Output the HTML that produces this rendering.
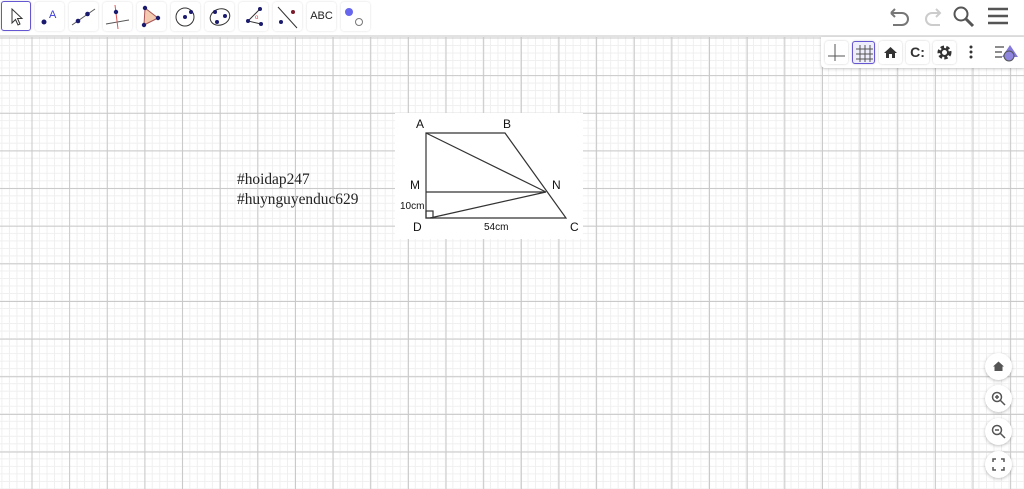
<!DOCTYPE html>
<html><head><meta charset="utf-8"><style>
*{margin:0;padding:0;box-sizing:border-box}
body{width:1024px;height:489px;overflow:hidden;position:relative;background:#fff;font-family:"Liberation Sans",sans-serif}
#grid{position:absolute;left:0;top:37px;width:1024px;height:452px;
background-image:
linear-gradient(to right,#c8c8c8 1px,transparent 1px),
linear-gradient(to bottom,#c8c8c8 1px,transparent 1px),
linear-gradient(to right,#efefef 1px,transparent 1px),
linear-gradient(to bottom,#efefef 1px,transparent 1px);
background-size:37.65px 37.65px,37.65px 37.65px,7.53px 7.53px,7.53px 7.53px;
background-position:31.5px 0.5px,31.5px 0.5px,31.5px 0.5px,31.5px 0.5px}
#tb{position:absolute;left:0;top:0;width:1024px;height:37px;background:#fff;border-bottom:2px solid #e2e2e2}
.tool{position:absolute;top:2px;width:29px;height:29px;border-radius:3px;background:#fff;box-shadow:0 0 2px rgba(0,0,0,.15)}
.tool svg{width:29px;height:29px}
.sel{border:1.5px solid #6557d2}
#ss{position:absolute;left:821px;top:37px;width:203px;height:31px;background:#fff;border-radius:0 0 0 4px;box-shadow:0 1px 3px rgba(0,0,0,.2)}
.sb{position:absolute;top:4px;width:23px;height:23px;border-radius:3px;box-shadow:0 0 2px rgba(0,0,0,.2)}
.rb{position:absolute;left:985px;width:27px;height:27px;border-radius:50%;background:#fff;box-shadow:0 1px 3px rgba(0,0,0,.25)}
.rb svg{width:27px;height:27px}
.tx{position:absolute;left:237px;font-family:"Liberation Serif",serif;font-size:15.4px;color:#222}
</style></head><body>
<div id="grid"></div>
<div id="tb">
<div class="tool sel" style="left:1px;top:1px;width:30px;height:30px"><svg viewBox="0 0 29 29"><path d="M10 7 L10 21 L13.5 17.5 L16 23 L18 22 L15.5 16.5 L20 16.5 Z" fill="none" stroke="#333" stroke-width="1"/></svg></div>
<div class="tool" style="left:35px"><svg viewBox="0 0 29 29"><circle cx="9" cy="20" r="2.5" fill="#1a1a6e"/><text x="14" y="16" font-size="11" fill="#3b3bd6" font-family="Liberation Sans">A</text></svg></div>
<div class="tool" style="left:69px"><svg viewBox="0 0 29 29"><line x1="3" y1="23" x2="26" y2="7" stroke="#555"/><circle cx="9" cy="19" r="2.3" fill="#1a1a6e"/><circle cx="18.5" cy="12" r="2.3" fill="#1a1a6e"/></svg></div>
<div class="tool" style="left:103px"><svg viewBox="0 0 29 29"><line x1="3" y1="22" x2="26" y2="18" stroke="#555"/><line x1="12" y1="3" x2="15" y2="27" stroke="#d55"/><circle cx="13" cy="10" r="2.2" fill="#1a1a6e"/></svg></div>
<div class="tool" style="left:137px"><svg viewBox="0 0 29 29"><path d="M8 6 L21 16 L7 23 Z" fill="#f3c9b0" stroke="#a55" /><circle cx="8" cy="6" r="2.2" fill="#1a1a6e"/><circle cx="21" cy="16" r="2.2" fill="#1a1a6e"/><circle cx="7" cy="23" r="2.2" fill="#1a1a6e"/></svg></div>
<div class="tool" style="left:171px"><svg viewBox="0 0 29 29"><circle cx="14" cy="15" r="9" fill="none" stroke="#333"/><circle cx="14" cy="15" r="2" fill="#1a1a6e"/><circle cx="20" cy="10" r="2" fill="#1a1a6e"/></svg></div>
<div class="tool" style="left:205px"><svg viewBox="0 0 29 29"><ellipse cx="15" cy="15" rx="10" ry="8" fill="none" stroke="#333" transform="rotate(-20 15 15)"/><circle cx="10" cy="10" r="2" fill="#1a1a6e"/><circle cx="20" cy="14" r="2" fill="#1a1a6e"/><circle cx="12" cy="20" r="2" fill="#1a1a6e"/></svg></div>
<div class="tool" style="left:239px"><svg viewBox="0 0 29 29"><path d="M21 7 L9 19 L22 22" fill="none" stroke="#333"/><circle cx="21" cy="7" r="2" fill="#1a1a6e"/><circle cx="9" cy="19" r="2" fill="#1a1a6e"/><circle cx="22" cy="22" r="2" fill="#1a1a6e"/><text x="16" y="17" font-size="6" fill="#d33">o</text></svg></div>
<div class="tool" style="left:273px"><svg viewBox="0 0 29 29"><line x1="5" y1="5" x2="24" y2="26" stroke="#333"/><circle cx="8" cy="20" r="2" fill="#1a1a6e"/><circle cx="20" cy="10" r="2" fill="#7a1a2a"/></svg></div>
<div class="tool" style="left:307px;font-size:11px;line-height:29px;text-align:center;color:#222">ABC</div>
<div class="tool" style="left:341px"><svg viewBox="0 0 29 29"><circle cx="8" cy="10" r="4" fill="#6666ee"/><circle cx="18" cy="20" r="3.5" fill="#fff" stroke="#777"/></svg></div>
<svg style="position:absolute;left:888px;top:4px" width="130" height="26" viewBox="0 0 130 26">
<path d="M9 9 L3 9 M3 9 L7 5 M3 9 L7 13 M4 9 L14 9 A6 6 0 0 1 14 21 L5 21" fill="none" stroke="#777" stroke-width="2"/>
<path d="M52 9 L44 9 A6 6 0 0 0 44 21 L52 21 M48 5 L52 9 L48 13" fill="none" stroke="#ccc" stroke-width="2"/>
<circle cx="73" cy="10" r="6.5" fill="none" stroke="#555" stroke-width="2"/><line x1="78" y1="15" x2="85" y2="22" stroke="#555" stroke-width="3"/>
<path d="M100 5 H120 M100 12 H120 M100 19 H120" stroke="#555" stroke-width="2.5"/>
</svg>
</div>
<div id="ss">
<div class="sb" style="left:4px"><svg width="23" height="23"><path d="M10 3 V20 M3 15 H20" stroke="#555"/></svg></div>
<div class="sb" style="left:31px;border:1px solid #6557d2;background:#eeedfb"><svg width="23" height="23"><path d="M7 3V20M12 3V20M17 3V20M3 7H20M3 12H20M3 17H20" stroke="#555"/></svg></div>
<div class="sb" style="left:58px"><svg width="23" height="23"><path d="M5 12 L11.5 6 L18 12 L16 12 L16 17 L13 17 L13 13 L10 13 L10 17 L7 17 L7 12Z" fill="#333"/></svg></div>
<div class="sb" style="left:85px;font-weight:bold;font-size:14px;line-height:23px;text-align:center;color:#333">C:</div>
<div class="sb" style="left:112px"><svg width="23" height="23"><circle cx="11.5" cy="11.5" r="5" fill="none" stroke="#333" stroke-width="4" stroke-dasharray="3 2"/><circle cx="11.5" cy="11.5" r="3.5" fill="none" stroke="#333" stroke-width="2"/></svg></div>
<svg style="position:absolute;left:147px;top:7px" width="6" height="16"><circle cx="3" cy="3" r="1.5" fill="#333"/><circle cx="3" cy="8" r="1.5" fill="#333"/><circle cx="3" cy="13" r="1.5" fill="#333"/></svg>
<svg style="position:absolute;left:173px;top:5px" width="26" height="22"><path d="M1 5H10M1 10H8M1 15H8" stroke="#666" stroke-width="1.5"/><path d="M16 3 L24 15 L8 15Z" fill="#6557d2" opacity=".8"/><circle cx="15" cy="14" r="5" fill="#8f86e0" stroke="#555"/></svg>
</div>
<div class="tx" style="top:171px">#hoidap247</div>
<div class="tx" style="top:191px">#huynguyenduc629</div>
<svg style="position:absolute;left:395px;top:113px" width="188" height="126" viewBox="395 113 188 126">
<rect x="395" y="113" width="188" height="126" fill="#fff"/>
<g stroke="#333" stroke-width="1.2" fill="none">
<path d="M426 133 H505 L566 218 H426 Z"/>
<path d="M426 133 L546 192 L426 192 M546 192 L430 218"/>
<rect x="426" y="211" width="7" height="7"/>
</g>
<g font-family="Liberation Sans" font-size="12" fill="#111">
<text x="416" y="128">A</text><text x="503" y="128">B</text>
<text x="410" y="189">M</text><text x="552" y="189">N</text>
<text x="413" y="231">D</text><text x="570" y="231">C</text>
<text x="400" y="209" font-size="10">10cm</text><text x="484" y="230" font-size="10">54cm</text>
</g></svg>
<div class="rb" style="top:353px"><svg viewBox="0 0 27 27"><path d="M8 13.5 L13.5 8.5 L19 13.5 L17.5 13.5 L17.5 18 L9.5 18 L9.5 13.5Z" fill="#555"/></svg></div>
<div class="rb" style="top:385px"><svg viewBox="0 0 27 27"><circle cx="12" cy="12" r="4.5" fill="none" stroke="#555" stroke-width="1.5"/><path d="M15 15 L20 20 M10 12H14M12 10V14" stroke="#555" stroke-width="1.5"/></svg></div>
<div class="rb" style="top:418px"><svg viewBox="0 0 27 27"><circle cx="12" cy="12" r="4.5" fill="none" stroke="#555" stroke-width="1.5"/><path d="M15 15 L20 20 M10 12H14" stroke="#555" stroke-width="1.5"/></svg></div>
<div class="rb" style="top:451px"><svg viewBox="0 0 27 27"><path d="M8 11V8H11M16 8H19V11M19 16V19H16M11 19H8V16" fill="none" stroke="#555" stroke-width="1.5"/></svg></div>
</body></html>
